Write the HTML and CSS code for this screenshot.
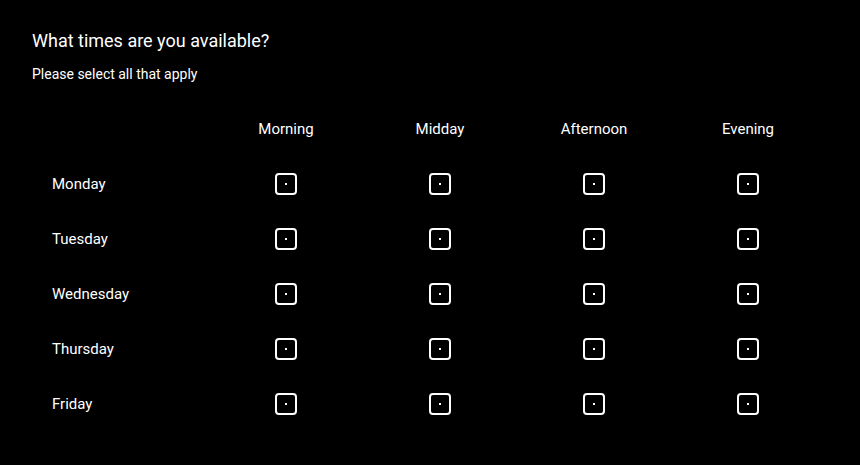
FILE: index.html
```html
<!DOCTYPE html>
<html lang="en">
<head>
    <meta charset="UTF-8">
    <meta name="viewport" content="width=device-width, initial-scale=1.0">
    <title>Availability</title>
    <link rel="stylesheet" href="styles.css">
</head>
<body>
    <div class="container">
        <h1>What times are you available?</h1>
        <p class="hint">Please select all that apply</p>
        <div class="grid">
            <div class="corner"></div>
            <div class="col-head">Morning</div>
            <div class="col-head">Midday</div>
            <div class="col-head">Afternoon</div>
            <div class="col-head">Evening</div>

            <div class="day">Monday</div>
            <div class="cell"><span class="box"></span></div>
            <div class="cell"><span class="box"></span></div>
            <div class="cell"><span class="box"></span></div>
            <div class="cell"><span class="box"></span></div>

            <div class="day">Tuesday</div>
            <div class="cell"><span class="box"></span></div>
            <div class="cell"><span class="box"></span></div>
            <div class="cell"><span class="box"></span></div>
            <div class="cell"><span class="box"></span></div>

            <div class="day">Wednesday</div>
            <div class="cell"><span class="box"></span></div>
            <div class="cell"><span class="box"></span></div>
            <div class="cell"><span class="box"></span></div>
            <div class="cell"><span class="box"></span></div>

            <div class="day">Thursday</div>
            <div class="cell"><span class="box"></span></div>
            <div class="cell"><span class="box"></span></div>
            <div class="cell"><span class="box"></span></div>
            <div class="cell"><span class="box"></span></div>

            <div class="day">Friday</div>
            <div class="cell"><span class="box"></span></div>
            <div class="cell"><span class="box"></span></div>
            <div class="cell"><span class="box"></span></div>
            <div class="cell"><span class="box"></span></div>
        </div>
    </div>
</body>
</html>
```

FILE: styles.css
```css
* {
    box-sizing: border-box;
    margin: 0;
    padding: 0;
}
body {
    font-family: Roboto, "Liberation Sans", sans-serif;
    background-color: #000;
    color: #fff;
}
.container {
    padding: 30px 32px;
}
h1 {
    font-size: 18px;
    font-weight: 400;
    line-height: 22px;
}
.hint {
    font-size: 14px;
    font-weight: 400;
    margin-top: 14px;
    line-height: 17px;
}
.grid {
    display: grid;
    grid-template-columns: 177px repeat(4, 154px);
    grid-template-rows: 56px repeat(5, 55px);
    margin-top: 17px;
}
.col-head {
    font-size: 15px;
    display: flex;
    align-items: flex-end;
    justify-content: center;
    padding-bottom: 18px;
}
.day {
    font-size: 15px;
    display: flex;
    align-items: center;
    padding-left: 20px;
}
.cell {
    display: flex;
    align-items: center;
    justify-content: center;
}
.box {
    width: 22px;
    height: 22px;
    border: 2px solid #fff;
    border-radius: 4px;
    display: flex;
    align-items: center;
    justify-content: center;
}
.box::after {
    content: "";
    width: 2px;
    height: 2px;
    background-color: #fff;
}
```
